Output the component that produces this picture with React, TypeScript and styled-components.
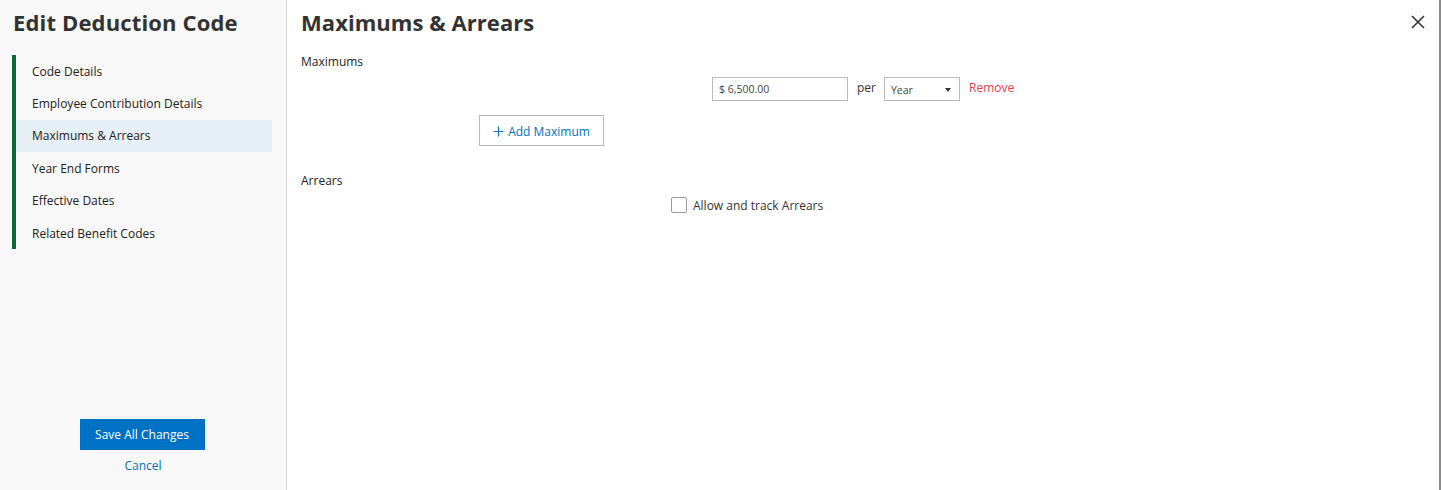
import React, { useState } from "react";
import styled, { createGlobalStyle } from "styled-components";

const GlobalStyle = createGlobalStyle`
  html, body { margin: 0; padding: 0; background: #fff; }
  body { font-family: "Open Sans", "Noto Sans", Arial, sans-serif; color: #222; }
  * { box-sizing: border-box; }
`;

const Page = styled.div`
  display: flex;
  width: 1441px;
  height: 490px;
  overflow: hidden;
`;

const Sidebar = styled.aside`
  width: 287px;
  flex: none;
  background: #f8f8f8;
  border-right: 1px solid #d6d6d6;
  display: flex;
  flex-direction: column;
`;

const SideTitle = styled.h1`
  margin: 0;
  padding: 8px 0 0 13px;
  font-size: 22px;
  font-weight: 700;
  color: #333;
  line-height: 28px;
  letter-spacing: 0.15px;
`;

const Nav = styled.nav`
  margin: 19px 0 0 12px;
  border-left: 4px solid #0a6b3a;
  width: 260px;
  display: flex;
  flex-direction: column;
`;

const NavItem = styled.div<{ $active?: boolean }>`
  height: 32.4px;
  display: flex;
  align-items: center;
  padding-left: 16px;
  font-size: 12px;
  color: #222;
  background: ${(p) => (p.$active ? "#e6eef6" : "transparent")};
`;

const SideFooter = styled.div`
  margin-top: auto;
  padding-bottom: 16px;
  display: flex;
  flex-direction: column;
  align-items: center;
  gap: 7px;
`;

const PrimaryButton = styled.button`
  width: 125px;
  height: 31px;
  margin-left: -2px;
  border: none;
  background: #0072c6;
  color: #fff;
  font-family: inherit;
  font-size: 12px;
  padding: 0;
  cursor: pointer;
`;

const LinkButton = styled.button`
  border: none;
  background: none;
  color: #0072c6;
  font-family: inherit;
  font-size: 12px;
  padding: 0;
  cursor: pointer;
`;

const Main = styled.main`
  flex: 1;
  border-right: 2px solid #8a8a8a;
  padding: 8px 14px 0 14px;
  display: flex;
  flex-direction: column;
`;

const Header = styled.div`
  display: flex;
  justify-content: space-between;
  align-items: flex-start;
`;

const MainTitle = styled.h2`
  margin: 0;
  font-size: 22px;
  font-weight: 700;
  color: #333;
  line-height: 28px;
  letter-spacing: 0.05px;
`;

const CloseButton = styled.button`
  border: none;
  background: none;
  padding: 0;
  margin: 6px -1px 0 0;
  width: 16px;
  height: 16px;
  cursor: pointer;
  display: flex;
`;

const SectionLabel = styled.div<{ $top: number }>`
  margin-top: ${(p) => p.$top}px;
  font-size: 12px;
  color: #222;
  line-height: 18px;
`;

const MaxRow = styled.div`
  display: flex;
  align-items: center;
  margin: 6px 0 0 411px;
  height: 24px;
`;

const AmountInput = styled.input`
  width: 136px;
  height: 24px;
  border: 1px solid #bbb;
  padding: 0 6px;
  font-family: inherit;
  font-size: 10.5px;
  color: #444;
  outline: none;
`;

const Per = styled.span`
  margin: 0 8px 0 9px;
  font-size: 12px;
  color: #333;
  position: relative;
  top: -2px;
`;

const SelectBox = styled.div`
  width: 76px;
  height: 24px;
  border: 1px solid #bbb;
  display: flex;
  align-items: center;
  justify-content: space-between;
  padding: 1px 8px 0 6px;
  font-size: 10.5px;
  color: #444;
`;

const Caret = styled.span`
  width: 0;
  height: 0;
  border-left: 3.5px solid transparent;
  border-right: 3.5px solid transparent;
  border-top: 4px solid #333;
`;

const RemoveLink = styled.span`
  margin-left: 9px;
  font-size: 12px;
  color: #e8404f;
  position: relative;
  top: -2px;
`;

const OutlineButton = styled.button`
  margin: 14px 0 0 178px;
  width: 125px;
  height: 31px;
  border: 1px solid #bbb;
  background: #fff;
  color: #0072c6;
  font-family: inherit;
  font-size: 12px;
  display: flex;
  align-items: center;
  justify-content: center;
  gap: 4px;
  padding: 1px 0 0 0;
`;

const CheckRow = styled.label`
  margin: 6px 0 0 370px;
  display: flex;
  align-items: center;
  gap: 6px;
  font-size: 12px;
  color: #333;
  height: 18px;
`;

const CheckBox = styled.span`
  width: 16px;
  height: 16px;
  border: 1px solid #999;
  border-radius: 2px;
  background: #fff;
`;

export default function App() {
  const [active] = useState(2);
  const items = [
    "Code Details",
    "Employee Contribution Details",
    "Maximums & Arrears",
    "Year End Forms",
    "Effective Dates",
    "Related Benefit Codes",
  ];
  return (
    <>
      <GlobalStyle />
      <Page>
        <Sidebar>
          <SideTitle>Edit Deduction Code</SideTitle>
          <Nav>
            {items.map((t, i) => (
              <NavItem key={t} $active={i === active}>
                {t}
              </NavItem>
            ))}
          </Nav>
          <SideFooter>
            <PrimaryButton>Save All Changes</PrimaryButton>
            <LinkButton>Cancel</LinkButton>
          </SideFooter>
        </Sidebar>
        <Main>
          <Header>
            <MainTitle>Maximums &amp; Arrears</MainTitle>
            <CloseButton aria-label="Close">
              <svg width="16" height="16" viewBox="0 0 16 16">
                <path d="M2 2 L14 14 M14 2 L2 14" stroke="#333" strokeWidth="1.6" />
              </svg>
            </CloseButton>
          </Header>
          <SectionLabel $top={17}>Maximums</SectionLabel>
          <MaxRow>
            <AmountInput defaultValue="$ 6,500.00" />
            <Per>per</Per>
            <SelectBox>
              <span>Year</span>
              <Caret />
            </SelectBox>
            <RemoveLink>Remove</RemoveLink>
          </MaxRow>
          <OutlineButton>
            <svg width="11" height="11" viewBox="0 0 11 11">
              <path d="M5.5 0.5 V10.5 M0.5 5.5 H10.5" stroke="#0072c6" strokeWidth="1.1" />
            </svg>
            Add Maximum
          </OutlineButton>
          <SectionLabel $top={26}>Arrears</SectionLabel>
          <CheckRow>
            <CheckBox />
            Allow and track Arrears
          </CheckRow>
        </Main>
      </Page>
    </>
  );
}
